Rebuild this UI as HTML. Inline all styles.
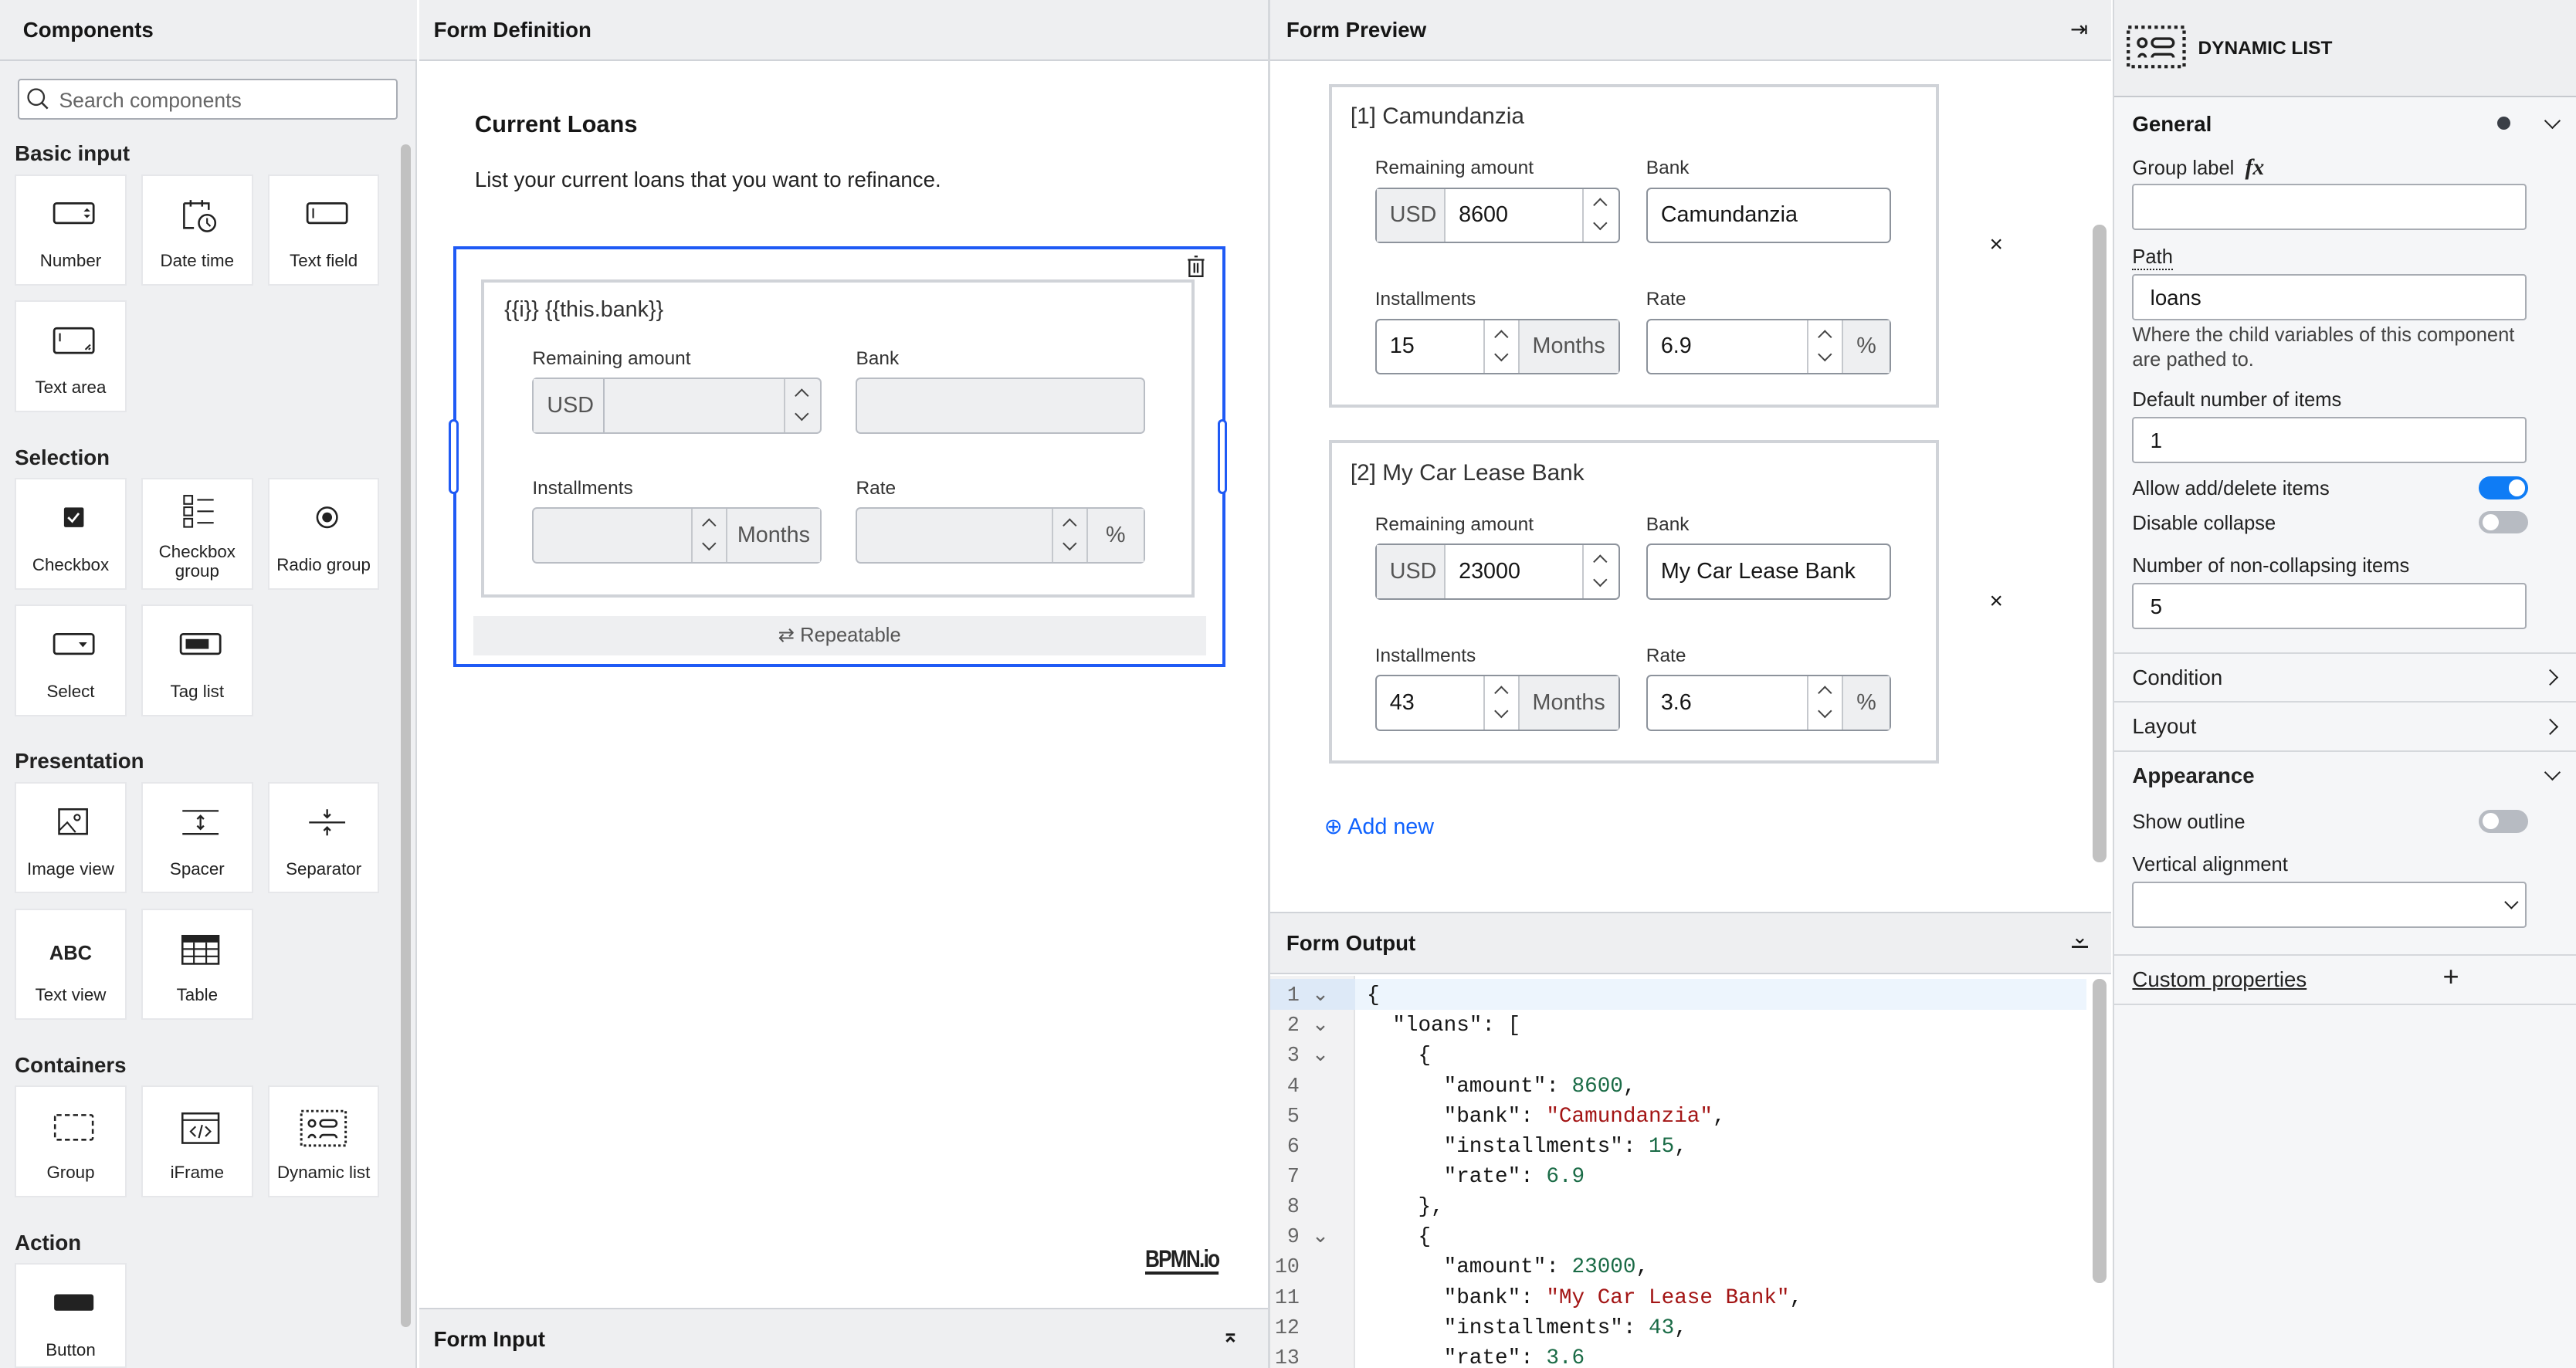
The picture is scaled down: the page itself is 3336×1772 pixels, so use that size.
<!DOCTYPE html>
<html><head><meta charset="utf-8"><style>
*{box-sizing:border-box;margin:0;padding:0}
html,body{width:3336px;height:1772px;overflow:hidden;background:#fff}
#w{zoom:2.12755;width:1568px;height:833px;position:relative;font-family:"Liberation Sans",sans-serif;color:#161616;font-size:12px}
.a{position:absolute}
.hdr{position:absolute;top:0;height:37px;background:#eeeff1;border-bottom:1px solid #d0d3d8;font-weight:bold;font-size:13px;padding:11px 9px}
.tile{position:absolute;width:68px;height:68px;background:#fff;border:1px solid #e6e7ea;text-align:center;font-size:10.5px;color:#222}
.tile svg{position:absolute;left:22px;top:14px}
.tile span{position:absolute;left:0;right:0;top:46px;line-height:12px}
.sec{position:absolute;left:9px;font-weight:bold;font-size:13px;color:#222}
.lbl{position:absolute;font-size:11.5px;color:#333}
.inp{position:absolute;border:1px solid #8d939c;border-radius:3px;background:#fff;font-size:13.5px;display:flex;align-items:center}
.inp.dis{background:#eeeff1;border-color:#b9bdc4}
.add{background:#eeeff1;color:#555;height:100%;display:flex;align-items:center;padding:0 8px;border-color:#c5c8cd}
.sp{width:22px;height:100%;border-left:1px solid #c5c8cd;border-right:1px solid #c5c8cd;position:relative;background:transparent}
.sp::before,.sp::after{content:"";position:absolute;left:7px;width:5px;height:5px;border-left:1px solid #444;border-top:1px solid #444}
.sp::before{top:7px;transform:rotate(45deg)}
.sp::after{bottom:8px;transform:rotate(225deg)}
.rp .lbl{font-size:12px;color:#222}
.rin{position:absolute;left:11px;width:240px;height:28px;border:1px solid #a8acb3;border-radius:2px;background:#fff;font-size:13px;padding:6px 10px}
.tog{position:absolute;left:222px;width:30px;height:14px;border-radius:7px;background:#b7bbc2}
.tog::after{content:"";position:absolute;top:2px;left:2px;width:10px;height:10px;border-radius:5px;background:#fff}
.tog.on{background:#0f7cf5}.tog.on::after{left:18px}
.row{position:absolute;left:0;right:0;height:30px;border-top:1px solid #d5d8dc;font-size:13px;padding:7px 11px;color:#222}
.chev{position:absolute;width:7px;height:7px;border-right:1.3px solid #222;border-bottom:1.3px solid #222}
.code{position:absolute;left:0;width:497px;font-family:"Liberation Mono",monospace;font-size:13px;line-height:18.4px}
.g{color:#1a6b46}.r{color:#a31515}
</style></head><body><div id="w">

<!-- Left panel -->
<div class="a" style="left:0;top:0;width:254px;height:833px;background:#eff0f2;border-right:1px solid #d5d8dc"></div>
<div class="hdr" style="left:0;width:254px;padding-left:14px">Components</div>
<div class="a" style="left:11px;top:48px;width:231px;height:25px;border:1px solid #a9adb4;border-radius:2px;background:#fff;font-size:12.5px;color:#666;padding:5px 0 0 24px">Search components</div>
<svg class="a" style="left:16px;top:53px" width="15" height="15" viewBox="0 0 15 15"><circle cx="6" cy="6" r="4.8" fill="none" stroke="#333" stroke-width="1.1"/><path d="M9.5 9.5L13 13" stroke="#333" stroke-width="1.2"/></svg>
<div class="a" style="left:242px;top:86px;width:10px;height:722px;"><div style="margin:2px auto;width:6px;height:720px;border-radius:3px;background:#c1c1c1"></div></div>

<div class="sec" style="top:86px">Basic input</div>
<div class="tile" style="left:9px;top:106px"><svg width="26" height="20"><rect x="1" y="3" width="24" height="12" rx="1.5" fill="none" stroke="#222" stroke-width="1.3"/><path d="M19 8l2-2 2 2zM19 10l2 2 2-2z" fill="#222"/></svg><span>Number</span></div>
<div class="tile" style="left:86px;top:106px"><svg width="26" height="22"><path d="M3 3h15v4M3 3v15h6M7 1v4M14 1v4" fill="none" stroke="#222" stroke-width="1.2"/><circle cx="17" cy="15" r="5" fill="none" stroke="#222" stroke-width="1.2"/><path d="M17 12v3l2 2" stroke="#222" fill="none"/></svg><span>Date time</span></div>
<div class="tile" style="left:163px;top:106px"><svg width="26" height="20"><rect x="1" y="3" width="24" height="12" rx="1.5" fill="none" stroke="#222" stroke-width="1.3"/><path d="M4.5 6v6" stroke="#222"/></svg><span>Text field</span></div>
<div class="tile" style="left:9px;top:183px"><svg width="26" height="20"><rect x="1" y="2" width="24" height="15" rx="1.5" fill="none" stroke="#222" stroke-width="1.3"/><path d="M4.5 5v5M20 15l3-3M22 15l1-1" stroke="#222"/></svg><span>Text area</span></div>

<div class="sec" style="top:271px">Selection</div>
<div class="tile" style="left:9px;top:291px"><svg width="26" height="20"><rect x="7" y="3" width="12" height="12" rx="1" fill="#222"/><path d="M9.5 9l2.5 2.5 4-5" stroke="#fff" fill="none" stroke-width="1.3"/></svg><span>Checkbox</span></div>
<div class="tile" style="left:86px;top:291px"><svg width="26" height="22" style="top:9px"><rect x="3" y="1" width="5" height="5" fill="none" stroke="#222"/><rect x="3" y="8" width="5" height="5" fill="none" stroke="#222"/><rect x="3" y="15" width="5" height="5" fill="none" stroke="#222"/><path d="M11 3.5h10M11 10.5h10M11 17.5h10" stroke="#222"/></svg><span style="top:38px">Checkbox<br>group</span></div>
<div class="tile" style="left:163px;top:291px"><svg width="26" height="20"><circle cx="13" cy="9" r="6" fill="none" stroke="#222" stroke-width="1.2"/><circle cx="13" cy="9" r="3" fill="#222"/></svg><span>Radio group</span></div>
<div class="tile" style="left:9px;top:368px"><svg width="26" height="20"><rect x="1" y="3" width="24" height="12" rx="1.5" fill="none" stroke="#222" stroke-width="1.3"/><path d="M16 8h5l-2.5 3z" fill="#222"/></svg><span>Select</span></div>
<div class="tile" style="left:86px;top:368px"><svg width="26" height="20"><rect x="1" y="3" width="24" height="12" rx="1.5" fill="none" stroke="#222" stroke-width="1.3"/><rect x="4" y="6" width="14" height="6" fill="#222"/></svg><span>Tag list</span></div>

<div class="sec" style="top:456px">Presentation</div>
<div class="tile" style="left:9px;top:476px"><svg width="26" height="22"><rect x="4" y="2" width="17" height="15" fill="none" stroke="#222" stroke-width="1.2"/><circle cx="15" cy="7" r="1.7" fill="none" stroke="#222"/><path d="M4 15l5-5 5 6" stroke="#222" fill="none"/></svg><span>Image view</span></div>
<div class="tile" style="left:86px;top:476px"><svg width="26" height="22"><path d="M2 3h22M2 17h22M13 6v8M11 8l2-2 2 2M11 12l2 2 2-2" stroke="#222" fill="none" stroke-width="1.1"/></svg><span>Spacer</span></div>
<div class="tile" style="left:163px;top:476px"><svg width="26" height="22"><path d="M2 10h22M13 2v5M11 5l2 2 2-2M13 18v-5M11 15l2-2 2 2" stroke="#222" fill="none" stroke-width="1.1"/></svg><span>Separator</span></div>
<div class="tile" style="left:9px;top:553px"><div style="position:absolute;top:20px;left:0;right:0;font-weight:bold;font-size:12px">ABC</div><span>Text view</span></div>
<div class="tile" style="left:86px;top:553px"><svg width="26" height="22"><rect x="2" y="2" width="22" height="17" fill="none" stroke="#222" stroke-width="1.2"/><rect x="2" y="2" width="22" height="4" fill="#222"/><path d="M2 10h22M2 14.5h22M9 6v13M16.5 6v13" stroke="#222"/></svg><span>Table</span></div>

<div class="sec" style="top:641px">Containers</div>
<div class="tile" style="left:9px;top:661px"><svg width="26" height="22"><rect x="1.5" y="3" width="23" height="15" rx="1" fill="none" stroke="#222" stroke-width="1.2" stroke-dasharray="3 2"/></svg><span>Group</span></div>
<div class="tile" style="left:86px;top:661px"><svg width="26" height="22"><rect x="2" y="2" width="22" height="18" fill="none" stroke="#222" stroke-width="1.2"/><path d="M2 6h22M10 10l-3 3 3 3M16 10l3 3-3 3M14 9l-2 8" stroke="#222" fill="none"/></svg><span>iFrame</span></div>
<div class="tile" style="left:163px;top:661px"><svg width="30" height="24" style="left:18px;top:13px"><rect x="1.5" y="1.5" width="27" height="21" fill="none" stroke="#222" stroke-width="1.4" stroke-dasharray="1.5 1.5"/><circle cx="8" cy="9" r="2" fill="none" stroke="#222" stroke-width="1.2"/><rect x="13" y="7" width="10" height="4" rx="2" fill="none" stroke="#222" stroke-width="1.2"/><path d="M6 18a2 2 0 0 1 4 0M13 18a2 2 0 0 1 2-2h6a2 2 0 0 1 2 2" stroke="#222" fill="none" stroke-width="1.2"/></svg><span>Dynamic list</span></div>

<div class="sec" style="top:749px">Action</div>
<div class="tile" style="left:9px;top:769px;height:64px"><svg width="26" height="20"><rect x="1" y="4" width="24" height="10" rx="1.5" fill="#222"/></svg><span>Button</span></div>

<!-- Form Definition -->
<div class="hdr" style="left:255px;width:517px;">Form Definition</div>
<div class="a" style="left:772px;top:0;width:1px;height:833px;background:#d5d8dc"></div>
<div class="a" style="left:289px;top:67px;font-weight:bold;font-size:14.5px">Current Loans</div>
<div class="a" style="left:289px;top:102px;font-size:13px;color:#222">List your current loans that you want to refinance.</div>
<div class="a" style="left:276px;top:150px;width:470px;height:256px;border:2px solid #1f5af5"></div>
<div class="a" style="left:273px;top:255px;width:6px;height:46px;border:1.5px solid #1f5af5;border-radius:3px;background:#fff"></div>
<div class="a" style="left:741px;top:255px;width:6px;height:46px;border:1.5px solid #1f5af5;border-radius:3px;background:#fff"></div>
<svg class="a" style="left:721px;top:154px" width="14" height="16"><path d="M3 4h8v10H3zM2 4h10M6 2h2M6 6v6M8 6v6" stroke="#222" fill="none" stroke-width="1.1"/></svg>
<div class="a" style="left:293px;top:170px;width:434px;height:194px;border:2px solid #d0d3d8"></div>
<div class="a" style="left:307px;top:181px;font-size:13.5px;color:#333">{{i}} {{this.bank}}</div>
<div class="lbl" style="left:324px;top:212px">Remaining amount</div>
<div class="lbl" style="left:521px;top:212px">Bank</div>
<div class="inp dis" style="left:324px;top:230px;width:176px;height:34px"><div class="add" style="border-right:1px solid #b9bdc4;width:43px">USD</div><div style="flex:1"></div><div class="sp" style="border-right:0"></div></div>
<div class="inp dis" style="left:521px;top:230px;width:176px;height:34px"></div>
<div class="lbl" style="left:324px;top:291px">Installments</div>
<div class="lbl" style="left:521px;top:291px">Rate</div>
<div class="inp dis" style="left:324px;top:309px;width:176px;height:34px"><div style="flex:1"></div><div class="sp"></div><div class="add" style="padding:0 6px">Months</div></div>
<div class="inp dis" style="left:521px;top:309px;width:176px;height:34px"><div style="flex:1"></div><div class="sp"></div><div class="add" style="padding:0 11px">%</div></div>
<div class="a" style="left:288px;top:375px;width:446px;height:24px;background:#eeeff1;text-align:center;font-size:12px;color:#555;padding-top:5px">⇄ Repeatable</div>
<div class="a" style="left:697px;top:758px;font-weight:bold;font-size:15px;letter-spacing:-1px;border-bottom:2px solid #222;line-height:16px;color:#222;transform:scaleX(0.82);transform-origin:left">BPMN.io</div>
<div class="a" style="left:255px;top:796px;width:517px;height:37px;background:#eeeff1;border-top:1px solid #d0d3d8;font-weight:bold;font-size:13px;padding:11px 9px">Form Input<span style="position:absolute;right:18px;top:9px;font-size:12px">⌅</span></div>

<!-- Form Preview -->
<div class="hdr" style="left:773px;width:512px;padding-left:10px">Form Preview<span style="position:absolute;right:14px;top:10px;font-size:13px;font-weight:normal">⇥</span></div>
<div class="a" style="left:1274px;top:137px;width:8px;height:388px;border-radius:4px;background:#c1c1c1"></div>
<div class="a" style="left:809px;top:51px;width:371px;height:197px;border:2px solid #d0d3d8"></div>
<div class="a" style="left:822px;top:63px;font-size:14px;color:#333">[1] Camundanzia</div>
<div class="lbl" style="left:837px;top:96px">Remaining amount</div><div class="lbl" style="left:1002px;top:96px">Bank</div>
<div class="inp" style="left:837px;top:114px;width:149px;height:34px"><div class="add" style="width:42px;border-right:1px solid #c5c8cd">USD</div><div style="flex:1;padding-left:8px">8600</div><div class="sp" style="border-right:0"></div></div>
<div class="inp" style="left:1002px;top:114px;width:149px;height:34px;padding-left:8px">Camundanzia</div>
<div class="lbl" style="left:837px;top:176px">Installments</div><div class="lbl" style="left:1002px;top:176px">Rate</div>
<div class="inp" style="left:837px;top:194px;width:149px;height:34px"><div style="flex:1;padding-left:8px">15</div><div class="sp"></div><div class="add">Months</div></div>
<div class="inp" style="left:1002px;top:194px;width:149px;height:34px"><div style="flex:1;padding-left:8px">6.9</div><div class="sp"></div><div class="add">%</div></div>
<div class="a" style="left:1211px;top:141px;font-size:14px">×</div>

<div class="a" style="left:809px;top:268px;width:371px;height:197px;border:2px solid #d0d3d8"></div>
<div class="a" style="left:822px;top:280px;font-size:14px;color:#333">[2] My Car Lease Bank</div>
<div class="lbl" style="left:837px;top:313px">Remaining amount</div><div class="lbl" style="left:1002px;top:313px">Bank</div>
<div class="inp" style="left:837px;top:331px;width:149px;height:34px"><div class="add" style="width:42px;border-right:1px solid #c5c8cd">USD</div><div style="flex:1;padding-left:8px">23000</div><div class="sp" style="border-right:0"></div></div>
<div class="inp" style="left:1002px;top:331px;width:149px;height:34px;padding-left:8px">My Car Lease Bank</div>
<div class="lbl" style="left:837px;top:393px">Installments</div><div class="lbl" style="left:1002px;top:393px">Rate</div>
<div class="inp" style="left:837px;top:411px;width:149px;height:34px"><div style="flex:1;padding-left:8px">43</div><div class="sp"></div><div class="add">Months</div></div>
<div class="inp" style="left:1002px;top:411px;width:149px;height:34px"><div style="flex:1;padding-left:8px">3.6</div><div class="sp"></div><div class="add">%</div></div>
<div class="a" style="left:1211px;top:358px;font-size:14px">×</div>
<div class="a" style="left:806px;top:495px;font-size:13.5px;color:#0f62fe">⊕ Add new</div>

<!-- Form Output -->
<div class="a" style="left:773px;top:555px;width:512px;height:38px;background:#eeeff1;border-top:1px solid #d0d3d8;border-bottom:1px solid #d0d3d8;font-weight:bold;font-size:13px;padding:11px 10px">Form Output<span style="position:absolute;right:14px;top:10px;font-size:12px;font-weight:normal;border-bottom:1.5px solid #222;line-height:10px">⌄</span></div>
<div class="a" style="left:773px;top:594px;width:52px;height:239px;background:#f2f2f3;border-right:1px solid #e2e3e5"></div>
<div class="a" style="left:773px;top:596px;width:52px;height:19px;background:#dde9f7"></div>
<div class="a" style="left:825px;top:596px;width:445px;height:19px;background:#edf5fd"></div>
<div class="a" style="left:1274px;top:596px;width:8px;height:185px;border-radius:4px;background:#c1c1c1"></div>
<div class="code" style="left:776px;top:597px;color:#666;width:50px;font-size:12.5px">&nbsp;1 ⌄<br>&nbsp;2 ⌄<br>&nbsp;3 ⌄<br>&nbsp;4<br>&nbsp;5<br>&nbsp;6<br>&nbsp;7<br>&nbsp;8<br>&nbsp;9 ⌄<br>10<br>11<br>12<br>13</div>
<div class="code" style="left:832px;top:597px;white-space:pre">{
  "loans": [
    {
      "amount": <span class="g">8600</span>,
      "bank": <span class="r">"Camundanzia"</span>,
      "installments": <span class="g">15</span>,
      "rate": <span class="g">6.9</span>
    },
    {
      "amount": <span class="g">23000</span>,
      "bank": <span class="r">"My Car Lease Bank"</span>,
      "installments": <span class="g">43</span>,
      "rate": <span class="g">3.6</span></div>

<!-- Right panel -->
<div class="a rp" style="left:1286px;top:0;width:282px;height:833px;background:#f5f6f8;border-left:1px solid #d5d8dc">
 <div class="a" style="left:0;top:0;width:282px;height:59px;background:#eeeff1;border-bottom:1px solid #c6c9ce"></div>
 <svg class="a" style="left:7px;top:15px" width="37" height="27"><rect x="1.5" y="1.5" width="34" height="24" fill="none" stroke="#222" stroke-width="2" stroke-dasharray="2 2"/><circle cx="10" cy="11" r="2.5" fill="none" stroke="#222" stroke-width="1.6"/><rect x="16" y="8.5" width="13" height="5" rx="2.5" fill="none" stroke="#222" stroke-width="1.6"/><path d="M8 20a2 2 0 0 1 4 0M16 20a2 2 0 0 1 2-2h9a2 2 0 0 1 2 2" stroke="#222" fill="none" stroke-width="1.6"/></svg>
 <div class="a" style="left:51px;top:23px;font-weight:bold;font-size:11.5px">DYNAMIC LIST</div>
 <div class="a" style="left:11px;top:68px;font-weight:bold;font-size:13px">General</div>
 <div class="a" style="left:233px;top:71px;width:8px;height:8px;border-radius:4px;background:#3a3f47"></div>
 <div class="chev" style="left:263px;top:70px;transform:rotate(45deg)"></div>
 <div class="lbl" style="left:11px;top:94px">Group label&nbsp; <i style="font-family:'Liberation Serif';font-weight:bold;font-size:14px">fx</i></div>
 <div class="rin" style="top:112px"></div>
 <div class="lbl" style="left:11px;top:150px;border-bottom:1px dotted #222">Path</div>
 <div class="rin" style="top:167px">loans</div>
 <div class="lbl" style="left:11px;top:197px;width:250px;color:#444;line-height:15px">Where the child variables of this component are pathed to.</div>
 <div class="lbl" style="left:11px;top:237px">Default number of items</div>
 <div class="rin" style="top:254px">1</div>
 <div class="lbl" style="left:11px;top:291px">Allow add/delete items</div><div class="tog on" style="top:290px"></div>
 <div class="lbl" style="left:11px;top:312px">Disable collapse</div><div class="tog" style="top:311px"></div>
 <div class="lbl" style="left:11px;top:338px">Number of non-collapsing items</div>
 <div class="rin" style="top:355px">5</div>
 <div class="row" style="top:397px">Condition<div class="chev" style="left:262px;top:11px;transform:rotate(-45deg)"></div></div>
 <div class="row" style="top:427px">Layout<div class="chev" style="left:262px;top:11px;transform:rotate(-45deg)"></div></div>
 <div class="row" style="top:457px;font-weight:bold">Appearance<div class="chev" style="left:263px;top:9px;transform:rotate(45deg)"></div></div>
 <div class="lbl" style="left:11px;top:494px">Show outline</div><div class="tog" style="top:493px"></div>
 <div class="lbl" style="left:11px;top:520px">Vertical alignment</div>
 <div class="rin" style="top:537px"><div class="chev" style="left:227px;top:8px;width:6px;height:6px;transform:rotate(45deg)"></div></div>
 <div class="row" style="top:581px;border-bottom:1px solid #d5d8dc;height:31px;text-decoration:underline">Custom properties<span style="position:absolute;left:200px;font-size:17px;top:3px;text-decoration:none">+</span></div>
</div>

</div></body></html>
